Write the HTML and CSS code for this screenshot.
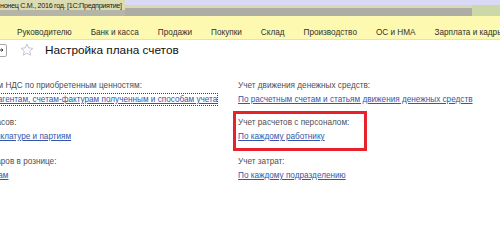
FILE: index.html
```html
<!DOCTYPE html>
<html lang="ru">

<head>
    <meta charset="UTF-8" />
    <title>Настройка плана счетов</title>
    <link rel="stylesheet" href="styles.css">
</head>

<body>
    <div class="titlebar">
        <span class="titlebar-text">нонец С.М., 2016 год. [1С:Предприятие]</span>
        <span class="titlebar-end"></span>
    </div>

    <nav class="sections">
        <span class="section">Руководителю</span>
        <span class="section">Банк и касса</span>
        <span class="section">Продажи</span>
        <span class="section">Покупки</span>
        <span class="section">Склад</span>
        <span class="section">Производство</span>
        <span class="section">ОС и НМА</span>
        <span class="section">Зарплата и кадры</span>
    </nav>

    <div class="form-head">
        <span class="nav-btn">
            <svg width="6" height="6" viewBox="0 0 6 6"><path d="M1 3h4M3.5 1.5L5 3 3.5 4.5" fill="none" stroke="#333" stroke-width="1"/></svg>
        </span>
        <svg class="star" width="14" height="14" viewBox="0 0 14 14">
            <path d="M7 1l1.7 3.9 4.2.4-3.2 2.8 1 4.1L7 10 3.3 12.2l1-4.1L1.1 5.3l4.2-.4z" fill="none" stroke="#c4c4d8" stroke-width="1"/>
        </svg>
        <h1>Настройка плана счетов</h1>
    </div>

    <div class="form-body">
        <div class="field">
            <div class="field-label">Учет сумм НДС по приобретенным ценностям:</div>
            <a class="field-link focused" href="#">По контрагентам, счетам-фактурам полученным и способам учета</a>
        </div>
        <div class="field">
            <div class="field-label">Учет движения денежных средств:</div>
            <a class="field-link" href="#">По расчетным счетам и статьям движения денежных средств</a>
        </div>
        <div class="field">
            <div class="field-label">Учет запасов:</div>
            <a class="field-link" href="#">По номенклатуре и партиям</a>
        </div>
        <div class="field field-marked">
            <div class="field-label">Учет расчетов с персоналом:</div>
            <a class="field-link" href="#">По каждому работнику</a>
        </div>
        <div class="field">
            <div class="field-label">Учет товаров в рознице:</div>
            <a class="field-link" href="#">По товарам</a>
        </div>
        <div class="field">
            <div class="field-label">Учет затрат:</div>
            <a class="field-link" href="#">По каждому подразделению</a>
        </div>
    </div>
</body>

</html>
```

FILE: styles.css
```css
body {
    margin: 0;
    padding: 0;
    font-family: "Liberation Sans", Arial, sans-serif;
    font-size: 8.2px;
    background-color: #fff;
    overflow: hidden;
}

.titlebar {
    height: 16px;
    display: flex;
    background: linear-gradient(#d9d9f5 0, #d9d9f5 5px, #d8d8b4 5px, #d8d8b4 8px, #adada6 8px);
}

.titlebar-text {
    width: 125px;
    padding-top: 1px;
    font-size: 7.2px;
    letter-spacing: -0.3px;
    white-space: nowrap;
    color: #1a1a1a;
    background: linear-gradient(#dcdcb2 0, #dcdcb2 10px, #b4b4a8 10px);
}

.titlebar-end {
    margin-left: auto;
    width: 28px;
    background: linear-gradient(#d9d9f5 0, #d9d9f5 5px, #ccd8a8 5px);
}

.sections {
    height: 24px;
    padding: 10px 0 0 17px;
    box-sizing: border-box;
    display: flex;
    gap: 19px;
    white-space: nowrap;
    line-height: 14px;
    color: #333;
    background-color: #fdf9b1;
    border-bottom: 1px solid #ece49c;
}

.form-head {
    height: 20px;
    display: flex;
    align-items: center;
}

.nav-btn {
    width: 17px;
    height: 13px;
    margin-left: -10px;
    border: 1px solid #a8a8a8;
    border-radius: 2px;
    display: flex;
    align-items: center;
    justify-content: flex-end;
    padding-right: 2px;
    box-sizing: border-box;
}

.star {
    margin-left: 13px;
}

h1 {
    margin: 0 0 0 11px;
    font-size: 11.8px;
    font-weight: normal;
    color: #111;
}

.form-body {
    margin: 19px 0 0 -36px;
    display: grid;
    grid-template-columns: 274px 1fr;
    row-gap: 9px;
}

.field {
    line-height: 14px;
    white-space: nowrap;
}

.field-label {
    color: #4f4f4f;
}

.field-link {
    color: #3656aa;
}

.focused {
    outline: 1px dotted #444;
    padding: 1px 0;
}

.field-marked {
    width: 124px;
    padding-bottom: 2px;
    outline: 3px solid #e8212b;
    outline-offset: 2px;
}
```
